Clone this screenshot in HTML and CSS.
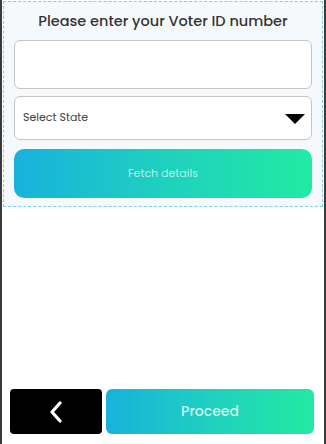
FILE: index.html
```html
<!DOCTYPE html>
<html lang="en">
<head>
  <meta charset="UTF-8" />
  <meta name="viewport" content="width=device-width, initial-scale=1.0"/>
  <title>Voter ID</title>
  <link rel="stylesheet" href="styles.css">
</head>
<body>
  <div class="screen">
    <div class="voter-box">
      <div class="voter-title">Please enter your Voter ID number</div>
      <input type="text" class="voter-input">
      <div class="state-select">
        <span>Select State</span>
        <svg width="20" height="10" viewBox="0 0 20 10"><polygon points="0,0 20,0 10,10" fill="#000"/></svg>
      </div>
      <button class="fetch-btn">Fetch details</button>
    </div>

    <div class="spacer"></div>

    <div class="bottom-bar">
      <button class="back-btn">
        <svg width="14" height="22" viewBox="0 0 14 22"><polyline points="11,2 3,11 11,20" fill="none" stroke="#fff" stroke-width="3.2" stroke-linecap="round" stroke-linejoin="round"/></svg>
      </button>
      <button class="proceed-btn">Proceed</button>
    </div>
  </div>
</body>
</html>
```

FILE: styles.css
```css
:root {
  --grad: linear-gradient(90deg, #17b2dc 0%, #1fd0bf 50%, #22eaa2 100%);
}

* {
  box-sizing: border-box;
}

body {
  margin: 0;
  font-family: 'Poppins', 'Inter', sans-serif;
  background: #fff;
}

.screen {
  width: 326px;
  height: 444px;
  border-left: 2px solid #3a3a3a;
  border-right: 2px solid #3a3a3a;
  display: flex;
  flex-direction: column;
}

.voter-box {
  margin: 1px 1px 0;
  height: 206px;
  background: #f6f9fc;
  border: 1px dashed #7fd2de;
  padding: 8px 10px 0;
  display: flex;
  flex-direction: column;
}

.voter-title {
  text-align: center;
  font-size: 14.5px;
  font-weight: 500;
  color: #333;
  height: 22px;
  line-height: 22px;
  margin-bottom: 8px;
}

.voter-input {
  width: 100%;
  height: 49px;
  border: 1px solid #c4c4c4;
  border-radius: 6px;
  background: #fff;
  margin-bottom: 7px;
}

.state-select {
  height: 44px;
  border: 1px solid #c4c4c4;
  border-radius: 6px;
  background: #fff;
  display: flex;
  align-items: center;
  justify-content: space-between;
  padding: 0 6px 1px 8px;
  font-size: 11px;
  color: #444;
  margin-bottom: 9px;
}

.state-select svg {
  margin-top: 2px;
}

.fetch-btn {
  height: 49px;
  border: none;
  border-radius: 10px;
  background: var(--grad);
  color: rgba(255, 255, 255, 0.7);
  font-family: inherit;
  font-size: 11px;
  width: 100%;
}

.spacer {
  flex: 1;
}

.bottom-bar {
  display: flex;
  gap: 4px;
  padding: 0 10px 10px 8px;
}

.back-btn {
  width: 92px;
  height: 45px;
  border: none;
  border-radius: 4px;
  background: #000;
  display: flex;
  align-items: center;
  justify-content: center;
}

.proceed-btn {
  flex: 1;
  height: 45px;
  border: none;
  border-radius: 6px;
  background: var(--grad);
  color: rgba(255, 255, 255, 0.8);
  font-family: inherit;
  font-size: 14px;
  font-weight: 500;
}
```
